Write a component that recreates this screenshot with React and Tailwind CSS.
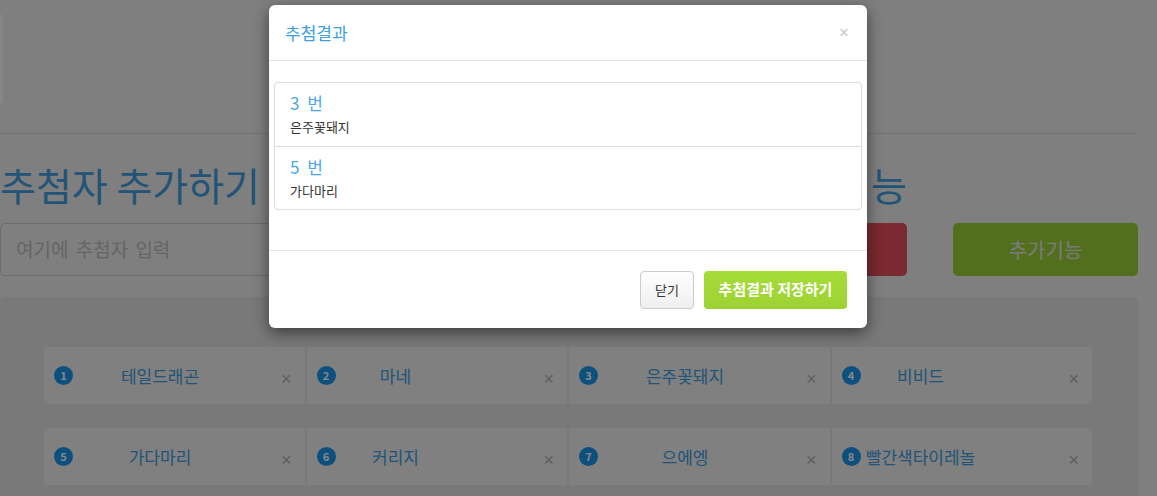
const players = [
  { n: 1, name: "테일드래곤" },
  { n: 2, name: "마네" },
  { n: 3, name: "은주꽃돼지" },
  { n: 4, name: "비비드" },
  { n: 5, name: "가다마리" },
  { n: 6, name: "커리지" },
  { n: 7, name: "으에엥" },
  { n: 8, name: "빨간색타이레놀" },
];

const results = [
  { no: 3, name: "은주꽃돼지" },
  { no: 5, name: "가다마리" },
];

const font = "font-['Noto_Sans_CJK_KR','Noto_Sans',sans-serif]";

function PlayerCard({ player, col }) {
  return (
    <div className="flex h-[57px] items-center bg-[#f1f1f1] pl-[10px] pr-[13px]">
      <span className="flex h-[19px] w-[19px] shrink-0 items-center justify-center rounded-full bg-[#1a98ec] text-[11px] font-bold leading-none text-white">
        {player.n}
      </span>
      <span
        className={
          (col % 2 === 0 ? "w-[174px]" : "w-[120px]") +
          " whitespace-nowrap text-center text-[17px] leading-none text-[#3f9fe0]"
        }
      >
        {player.name}
      </span>
      <span className="ml-auto mt-[6px] font-['Liberation_Sans',sans-serif] text-[18px] leading-none text-[#b0b0b0]">
        ×
      </span>
    </div>
  );
}

export default function App() {
  return (
    <div className={`relative h-[496px] overflow-hidden bg-[#f0f0f0] ${font}`}>
      {/* page behind the modal */}
      <div className="w-[1138px]">
        <div className="pt-[15px]">
          <div className="h-[88px] w-[3px] bg-white" />
        </div>
        <div className="mt-[30px] border-t border-[#d9d9d9]" />

        <div className="mt-[28px] flex w-[907px] items-end justify-between">
          <h1 className="text-[39px] leading-[44px] text-[#3f9fe0]">추첨자 추가하기</h1>
          <h1 className="text-[39px] leading-[44px] text-[#3f9fe0]">추첨 기능</h1>
        </div>

        <div className="mt-[17px] flex items-center">
          <div className="flex h-[53px] w-[907px]">
            <div className="flex flex-1 items-center rounded-l-[5px] border border-[#cccccc] px-[15px] text-[19px] text-[#bdbdbd] [word-spacing:3px]">
              여기에 추첨자 입력
            </div>
            <div className="flex w-[150px] items-center justify-center rounded-r-[5px] bg-[#e6505c] text-[19px] text-white">
              추첨하기
            </div>
          </div>
          <div className="ml-auto flex h-[53px] w-[185px] items-center justify-center rounded-[5px] bg-[#9bd137] text-[20px] text-[#e8e8e8]">
            추가기능
          </div>
        </div>

        <div className="mt-[21px] h-[260px] rounded-t-[5px] bg-[#e4e4e4] pl-[44px] pt-[50px]">
          <div className="grid w-[1048px] grid-cols-4 gap-x-[2px] gap-y-[24px]">
            {players.map((p, i) => (
              <PlayerCard key={p.n} player={p} col={i % 4} />
            ))}
          </div>
        </div>
      </div>

      {/* backdrop */}
      <div className="absolute inset-0 bg-black/[0.47]" />

      {/* modal */}
      <div className="absolute left-[269px] top-[5px] w-[598px] rounded-[6px] bg-white shadow-[0_5px_15px_rgba(0,0,0,0.5)]">
        <div className="flex h-[56px] items-center justify-between border-b border-[#e5e5e5] pl-[16px] pr-[18px]">
          <h4 className="text-[17px] text-[#3d9fe2]">추첨결과</h4>
          <span className="font-['Liberation_Sans',sans-serif] text-[17px] leading-none text-[#c8c8c8]">×</span>
        </div>

        <div className="px-[5px] pb-[40px] pt-[21px]">
          <div className="rounded-[4px] border border-[#dddddd]">
            {results.map((r, i) => (
              <div
                key={r.no}
                className={
                  "h-[63px] px-[15px] pt-[8px] " + (i > 0 ? "border-t border-[#dddddd]" : "")
                }
              >
                <div className="text-[17px] leading-[24px] text-[#4aa6e8] [word-spacing:4px]">{r.no} 번</div>
                <div className="mt-[2px] text-[13px] leading-[20px] text-[#333333]">{r.name}</div>
              </div>
            ))}
          </div>
        </div>

        <div className="flex h-[78px] items-center justify-end gap-[10px] border-t border-[#e5e5e5] pr-[20px]">
          <button className="h-[38px] w-[54px] rounded-[4px] border border-[#cccccc] bg-gradient-to-b from-white to-[#efefef] text-[13px] text-[#333333]">
            닫기
          </button>
          <button className="h-[38px] w-[143px] rounded-[4px] bg-gradient-to-b from-[#a6dc38] to-[#9dd233] text-[15px] font-bold text-white">
            추첨결과 저장하기
          </button>
        </div>
      </div>
    </div>
  );
}
